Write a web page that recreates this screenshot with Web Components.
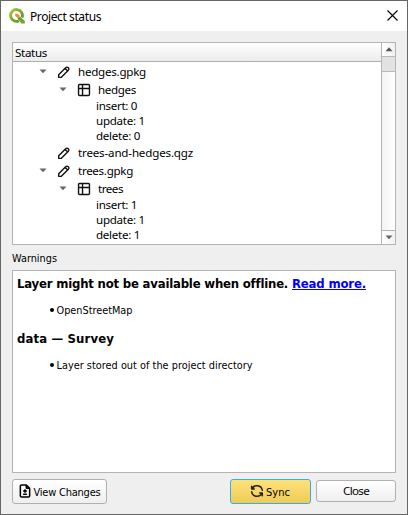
<!DOCTYPE html>
<html lang="en"><head><meta charset="utf-8"><title>Project status</title>
<style>
html,body{margin:0;height:100%;overflow:hidden;background:#666}
body{font:11.6px/15px "Noto Sans","Open Sans",sans-serif;color:#000}
</style></head><body>
<status-window></status-window>
<script>
const define=(name,html,setup)=>customElements.define(name,class extends HTMLElement{
  connectedCallback(){
    if(this.shadowRoot)return;
    const r=this.attachShadow({mode:'open'});
    r.innerHTML=html;
    if(setup)setup(this,r);
  }
});

/* Single line of text tracked to an exact width */
define('fit-text',`<style>:host{display:inline-block;white-space:pre;flex:none}span{display:inline-block;white-space:pre}:host([link]) span{text-decoration:underline}</style><span><slot></slot></span>`,(h,r)=>{
  const s=r.querySelector('span'),w=+h.getAttribute('w');
  const n=h.textContent.length;
  s.style.letterSpacing=((w-s.getBoundingClientRect().width)/n)+'px';
  h.style.width=w+'px';
});

const line=(d,c='#111',w=2.1)=>['0 0 24 24',16,16,`<path d="${d}" fill="none" stroke="${c}" stroke-width="${w}" stroke-linecap="round" stroke-linejoin="round"/>`];
const icons={
 logo:['0 0 16 16',16,16,`<defs><linearGradient id="g" x2="1" y2="1"><stop stop-color="#a5c83c"/><stop offset="1" stop-color="#4d8f25"/></linearGradient></defs><path d="M13 9.6A5.9 5.9 0 1 0 9.8 12.9" fill="none" stroke="url(#g)" stroke-width="2.9"/><path d="M9.2 8.6h1.8L15.8 13v2.4h-3.2L8.6 11z" fill="#6fa532"/><path d="M6.2 5.8h2.6l1.9 1.9-2 2.2-2.5-2z" fill="#f08a35"/>`],
 close:['0 0 11 11',11,11,`<path d="M.5.5l10 10M10.5.5l-10 10" stroke="#000" stroke-width="1.1"/>`],
 pen:line('M4 20h4L18.5 9.5a2.8 2.8 0 0 0-4-4L4 16zM13.5 6.5l4 4'),
 table:line('M5.3 3.8h13.4a1.5 1.5 0 0 1 1.5 1.5v13.4a1.5 1.5 0 0 1-1.5 1.5H5.3a1.5 1.5 0 0 1-1.5-1.5V5.3a1.5 1.5 0 0 1 1.5-1.5zM3.8 9.8h16.4M9.8 3.8v16.4'),
 down:['0 0 8 5',8,5,`<path d="M.5.5h7L4 4.2z" fill="#666"/>`],
 up:['0 0 8 5',8,5,`<path d="M.5 4.2h7L4 .3z" fill="#555"/>`],
 file:line('M14 3v4a1 1 0 0 0 1 1h4M17 21H7a2 2 0 0 1-2-2V5a2 2 0 0 1 2-2h7l5 5v11a2 2 0 0 1-2 2zM12 10v4M10 12h4M10 17h4','#000',2.3),
 sync:line('M20 11A8.1 8.1 0 0 0 4.5 9M4 5v4h4M4 13a8.1 8.1 0 0 0 15.5 2m.5 4v-4h-4','#222',2.2)
};
define('ui-icon',`<style>:host{display:block;flex:none}svg{display:block}</style>`,(h,r)=>{
  const [vb,w,ht,m]=icons[h.getAttribute('name')];
  r.innerHTML+=`<svg viewBox="${vb}" width="${w}" height="${ht}">${m}</svg>`;
});

define('title-bar',`<style>:host{display:flex;align-items:center;height:30px;background:#fff;padding:0 9px 0 8px;box-sizing:border-box;font-size:12px}
::slotted(fit-text){margin-left:5px}.x{margin:0 0 2px auto}</style><ui-icon name="logo"></ui-icon><slot></slot><ui-icon class="x" name="close"></ui-icon>`);

define('tree-row',`<style>:host{display:flex;align-items:center;height:18px;box-sizing:border-box}
:host([leaf]){height:15px}.a{width:8px;flex:none;padding-bottom:1px}.i{display:flex;justify-content:center;width:16px;margin:0 6px 0 9px}::slotted(fit-text){margin-top:-2px}</style><div class="a"></div><div class="i"></div><slot></slot>`,(h,r)=>{
  const d=+h.getAttribute('depth');
  if(h.hasAttribute('leaf')){h.style.paddingLeft='83px';r.querySelector('.a').remove();r.querySelector('.i').remove();return}
  h.style.paddingLeft=(26+d*20)+'px';
  if(h.hasAttribute('open'))r.querySelector('.a').innerHTML='<ui-icon name="down"></ui-icon>';
  r.querySelector('.i').innerHTML=`<ui-icon name="${h.getAttribute('icon')}"></ui-icon>`;
});

define('scroll-bar',`<style>:host{display:flex;flex-direction:column;width:13px;border-left:1px solid #b4b4b4;background:linear-gradient(90deg,#f3f3f3,#fff)}
div{display:flex;align-items:center;justify-content:center;height:13px;background:linear-gradient(90deg,#fff,#f1f1f1)}
.t{height:14px;background:#e2e2e2;border:solid #b9b9b9;border-width:1px 0}.d{margin-top:auto;border-top:1px solid #b4b4b4}</style>
<div><ui-icon name="up"></ui-icon></div><div class="t"></div><div class="d"><ui-icon name="down"></ui-icon></div>`);

define('status-tree',`<style>:host{display:flex;height:203px;box-sizing:border-box;border:1px solid #b4b4b4;background:#fff}
.m{flex:1}.h{height:18px;display:flex;align-items:center;padding-left:2px;border-bottom:1px solid #b0b0b0;background:linear-gradient(#fff,#ececec)}.r{padding-top:1px}</style>
<div class="m"><div class="h"><slot name="head"></slot></div><div class="r"><slot></slot></div></div><scroll-bar></scroll-bar>`);

define('warning-item',`<style>:host{display:flex;align-items:center;height:15px;padding-left:33px;font:10.8px/15px "DejaVu Sans Condensed","DejaVu Sans",sans-serif}
i{width:4px;height:4px;border-radius:50%;background:#000;margin:0 2.5px 2px 0}</style><i></i><slot></slot>`);
define('warning-head',`<style>:host{display:flex;height:18px;font:bold 13px/18px "DejaVu Sans Condensed","DejaVu Sans",sans-serif}
::slotted(a){color:#00f;margin-left:5px}</style><slot></slot>`);
define('warning-list',`<style>:host{display:block;height:203px;box-sizing:border-box;border:1px solid #b4b4b4;background:#fff;padding:4px}</style><slot></slot>`);

define('push-button',`<style>:host{display:flex;align-items:center;justify-content:center;box-sizing:border-box;height:22px;width:80px;border:1px solid #b0b0b0;border-radius:3px;background:linear-gradient(#fff,#efefef)}
:host([kind=view]){width:95px;height:25px}:host([kind=sync]){height:25px;width:81px;border-color:#3daaf0;background:linear-gradient(#ffe17a,#edcc55)}
::slotted(ui-icon){margin:0 1px 1px -2px}:host([kind]) ::slotted(fit-text){margin-top:2px}</style><slot></slot>`);

define('status-window',`<style>
:host{display:flex;flex-direction:column;box-sizing:border-box;width:408px;height:515px;border:1px solid #666;background:#efefef}
main{padding:11px 11px 0}
.label{height:25px;display:flex;align-items:center;padding-top:1px;box-sizing:border-box;font:10.8px/15px "DejaVu Sans Condensed","DejaVu Sans",sans-serif}
warning-item{margin-top:10px}.h2{margin-top:12px}
footer{display:flex;margin-top:6px;align-items:flex-start}
.s{margin-left:auto}.c{margin:1px 0 0 5px}.c fit-text{margin-top:-2px}.v,.s{font:11px/15px "DejaVu Sans Condensed","DejaVu Sans",sans-serif}
</style>
<title-bar><fit-text w="71">Project status</fit-text></title-bar>
<main>
<status-tree><fit-text slot="head" w="32">Status</fit-text>
<tree-row depth="0" open icon="pen"><fit-text w="68">hedges.gpkg</fit-text></tree-row>
<tree-row depth="1" open icon="table"><fit-text w="38">hedges</fit-text></tree-row>
<tree-row leaf><fit-text w="41">insert: 0</fit-text></tree-row>
<tree-row leaf><fit-text w="49">update: 1</fit-text></tree-row>
<tree-row leaf><fit-text w="44">delete: 0</fit-text></tree-row>
<tree-row depth="0" icon="pen"><fit-text w="115">trees-and-hedges.qgz</fit-text></tree-row>
<tree-row depth="0" open icon="pen"><fit-text w="55">trees.gpkg</fit-text></tree-row>
<tree-row depth="1" open icon="table"><fit-text w="25">trees</fit-text></tree-row>
<tree-row leaf><fit-text w="41">insert: 1</fit-text></tree-row>
<tree-row leaf><fit-text w="49">update: 1</fit-text></tree-row>
<tree-row leaf><fit-text w="44">delete: 1</fit-text></tree-row>
</status-tree>
<div class="label"><fit-text w="45">Warnings</fit-text></div>
<warning-list>
<warning-head><fit-text w="270">Layer might not be available when offline.</fit-text><a><fit-text link w="74">Read more.</fit-text></a></warning-head>
<warning-item><fit-text w="76">OpenStreetMap</fit-text></warning-item>
<warning-head class="h2"><fit-text w="97">data — Survey</fit-text></warning-head>
<warning-item><fit-text w="196">Layer stored out of the project directory</fit-text></warning-item>
</warning-list>
<footer>
<push-button class="v" kind="view"><ui-icon name="file"></ui-icon><fit-text w="67">View Changes</fit-text></push-button>
<push-button class="s" kind="sync"><ui-icon name="sync"></ui-icon><fit-text w="24">Sync</fit-text></push-button>
<push-button class="c"><fit-text w="26">Close</fit-text></push-button>
</footer>
</main>`);
</script></body></html>
